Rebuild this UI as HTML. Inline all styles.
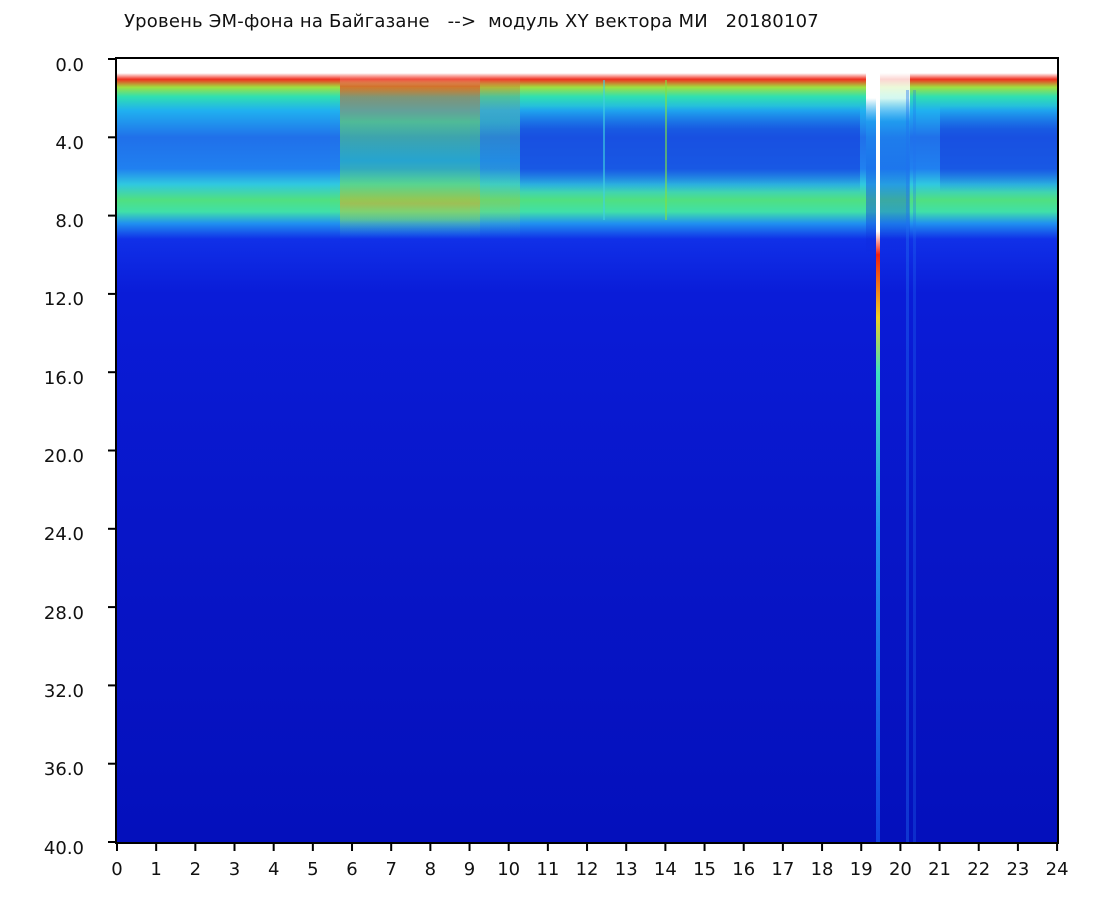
<!DOCTYPE html>
<html><head><meta charset="utf-8">
<style>
html,body{margin:0;padding:0;background:#fff;width:1096px;height:900px;overflow:hidden}
body{position:relative;font-family:"DejaVu Sans","Liberation Sans",sans-serif;color:#111}
.t{position:absolute;left:124px;top:11px;font-size:18px;white-space:pre;letter-spacing:0.2px}
.yl{position:absolute;width:84px;text-align:right;left:0;font-size:18px}
.xl{position:absolute;width:36px;text-align:center;font-size:18px;top:859px}
</style></head><body>
<div class="t">Уровень ЭМ-фона на Байгазане   --&gt;  модуль XY вектора МИ   20180107</div>
<svg width="1096" height="900" style="position:absolute;left:0;top:0">
<defs>
<linearGradient id="base" gradientUnits="userSpaceOnUse" x1="0" y1="59" x2="0" y2="842">
<stop offset="0" stop-color="#ffffff"/>
<stop offset="0.018" stop-color="#ffffff"/>
<stop offset="0.026" stop-color="#f03020"/>
<stop offset="0.036" stop-color="#a0e040"/>
<stop offset="0.048" stop-color="#30e0b0"/>
<stop offset="0.066" stop-color="#20b0f0"/>
<stop offset="0.10" stop-color="#2070ea"/>
<stop offset="0.14" stop-color="#2080f0"/>
<stop offset="0.16" stop-color="#30c8e0"/>
<stop offset="0.18" stop-color="#50e080"/>
<stop offset="0.195" stop-color="#40e0a8"/>
<stop offset="0.21" stop-color="#2090f0"/>
<stop offset="0.23" stop-color="#1030e8"/>
<stop offset="0.30" stop-color="#0a1cd8"/>
<stop offset="0.6" stop-color="#0816c8"/>
<stop offset="1" stop-color="#0410bc"/>
</linearGradient>
<linearGradient id="warm" gradientUnits="userSpaceOnUse" x1="0" y1="59" x2="0" y2="842">
<stop offset="0" stop-color="#fff" stop-opacity="0"/>
<stop offset="0.02" stop-color="#fff" stop-opacity="0"/>
<stop offset="0.035" stop-color="#f03020" stop-opacity="0.6"/>
<stop offset="0.05" stop-color="#f03020" stop-opacity="0.4"/>
<stop offset="0.08" stop-color="#80e040" stop-opacity="0.5"/>
<stop offset="0.13" stop-color="#30e0a0" stop-opacity="0.4"/>
<stop offset="0.16" stop-color="#80e040" stop-opacity="0.5"/>
<stop offset="0.185" stop-color="#f0a020" stop-opacity="0.5"/>
<stop offset="0.205" stop-color="#a0e040" stop-opacity="0.4"/>
<stop offset="0.23" stop-color="#20a0f0" stop-opacity="0"/>
</linearGradient>
<linearGradient id="cool" gradientUnits="userSpaceOnUse" x1="0" y1="59" x2="0" y2="842">
<stop offset="0" stop-color="#1030d8" stop-opacity="0"/>
<stop offset="0.06" stop-color="#1030d8" stop-opacity="0"/>
<stop offset="0.09" stop-color="#1030d8" stop-opacity="0.5"/>
<stop offset="0.14" stop-color="#1030d8" stop-opacity="0.5"/>
<stop offset="0.17" stop-color="#1030d8" stop-opacity="0"/>
</linearGradient>
<linearGradient id="line" gradientUnits="userSpaceOnUse" x1="0" y1="59" x2="0" y2="842">
<stop offset="0" stop-color="#fff"/>
<stop offset="0.22" stop-color="#fff"/>
<stop offset="0.25" stop-color="#f02010"/>
<stop offset="0.33" stop-color="#f0d020"/>
<stop offset="0.4" stop-color="#40e0c0"/>
<stop offset="0.6" stop-color="#2090f0"/>
<stop offset="1" stop-color="#1040e0"/>
</linearGradient>
<linearGradient id="gap" gradientUnits="userSpaceOnUse" x1="0" y1="59" x2="0" y2="842">
<stop offset="0" stop-color="#fff"/>
<stop offset="0.05" stop-color="#fff"/>
<stop offset="0.08" stop-color="#20a0f0" stop-opacity="0.6"/>
<stop offset="0.2" stop-color="#1030e0" stop-opacity="0.4"/>
<stop offset="0.25" stop-color="#0818c8" stop-opacity="0"/>
</linearGradient>
</defs>
<rect x="117" y="59" width="940" height="783" fill="url(#base)"/>
<rect x="340" y="59" width="140" height="200" fill="url(#warm)"/>
<rect x="480" y="59" width="40" height="200" fill="url(#warm)" opacity="0.4"/>
<rect x="520" y="59" width="340" height="200" fill="url(#cool)"/>
<rect x="940" y="59" width="117" height="200" fill="url(#cool)"/>
<rect x="866" y="59" width="10" height="260" fill="url(#gap)"/>
<rect x="880" y="59" width="30" height="260" fill="url(#gap)" opacity="0.8"/>
<rect x="876" y="59" width="4" height="783" fill="url(#line)"/>
<rect x="906" y="90" width="3" height="752" fill="#2070f0" opacity="0.4"/>
<rect x="913" y="90" width="3" height="752" fill="#2070f0" opacity="0.3"/>
<rect x="665" y="80" width="2" height="140" fill="#80e040" opacity="0.6"/>
<rect x="603" y="80" width="2" height="140" fill="#40d0e0" opacity="0.6"/>
<rect x="116" y="58" width="942" height="785" fill="none" stroke="#000" stroke-width="2"/>
<g stroke="#000" stroke-width="2">
<line x1="108" y1="59" x2="116" y2="59"/>
<line x1="108" y1="137.3" x2="116" y2="137.3"/>
<line x1="108" y1="215.6" x2="116" y2="215.6"/>
<line x1="108" y1="293.9" x2="116" y2="293.9"/>
<line x1="108" y1="372.2" x2="116" y2="372.2"/>
<line x1="108" y1="450.5" x2="116" y2="450.5"/>
<line x1="108" y1="528.8" x2="116" y2="528.8"/>
<line x1="108" y1="607.1" x2="116" y2="607.1"/>
<line x1="108" y1="685.4" x2="116" y2="685.4"/>
<line x1="108" y1="763.7" x2="116" y2="763.7"/>
<line x1="108" y1="842" x2="116" y2="842"/>
</g>
<g id="xt" stroke="#000" stroke-width="2"></g>
</svg>
<div class="yl" style="top:55px">0.0</div>
<div class="yl" style="top:133px">4.0</div>
<div class="yl" style="top:211px">8.0</div>
<div class="yl" style="top:289px">12.0</div>
<div class="yl" style="top:368px">16.0</div>
<div class="yl" style="top:446px">20.0</div>
<div class="yl" style="top:524px">24.0</div>
<div class="yl" style="top:603px">28.0</div>
<div class="yl" style="top:681px">32.0</div>
<div class="yl" style="top:759px">36.0</div>
<div class="yl" style="top:838px">40.0</div>
<div id="xls"></div>
<script>
var g=document.getElementById('xt'),x=document.getElementById('xls'),h='';
for(var i=0;i<=24;i++){var p=117+39.17*i;
var l=document.createElementNS('http://www.w3.org/2000/svg','line');
l.setAttribute('x1',p);l.setAttribute('x2',p);l.setAttribute('y1',842);l.setAttribute('y2',851);g.appendChild(l);
h+='<div class="xl" style="left:'+(p-18)+'px">'+i+'</div>';}
x.innerHTML=h;
</script>
</body></html>
